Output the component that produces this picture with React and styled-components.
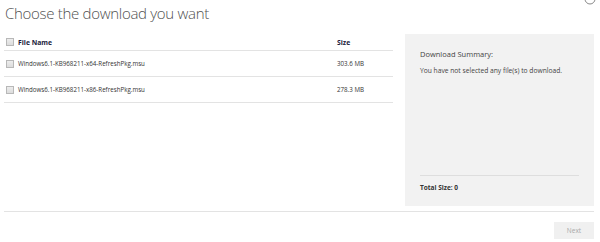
import * as React from 'react'
import styled, { createGlobalStyle } from 'styled-components'

const GlobalStyle = createGlobalStyle`
    html, body {
        margin: 0;
        padding: 0;
        background: #fff;
        font-family: "Open Sans", "Noto Sans", sans-serif;
    }
`

const Page = styled.div`
    position: relative;
    width: 600px;
    height: 242px;
    padding: 0 6px 0 4px;
    box-sizing: border-box;
    overflow: hidden;
`

const CloseIcon = styled.svg`
    position: absolute;
    top: -7px;
    right: 4px;
`

const Title = styled.h1`
    margin: 0;
    padding: 4px 0 0 1px;
    height: 30px;
    box-sizing: border-box;
    font-weight: 300;
    font-size: 15px;
    letter-spacing: -0.3px;
    line-height: 19px;
    color: #505050;
`

const Main = styled.div`
    display: grid;
    grid-template-columns: 389px 189px;
    column-gap: 12px;
    margin-top: 4px;
    height: 172px;
    padding-bottom: 5px;
    border-bottom: 1px solid #e3e3e3;
`

const FileTable = styled.div`
    display: flex;
    flex-direction: column;
`

const Row = styled.div`
    display: grid;
    grid-template-columns: 12px 319px 1fr;
    align-items: center;
    height: ${props => props.header ? 16 : 25}px;
    border-bottom: 1px solid #e3e3e3;
    padding-left: 2px;
    font-size: ${props => props.header ? 6.8 : 6.2}px;
    font-weight: ${props => props.header ? 700 : 400};
    color: ${props => props.header ? '#1a1a3a' : '#333'};
`

const Check = styled.span`
    width: 6px;
    height: 6px;
    border: 1px solid #b8b8b8;
    background: linear-gradient(#ededed, #dcdcdc);
`

const Summary = styled.div`
    background: #f2f2f2;
    display: flex;
    flex-direction: column;
    padding: 15px 15px 0 15px;
`

const SummaryTitle = styled.div`
    font-size: 7.5px;
    color: #444;
    margin-bottom: 7px;
`

const SummaryText = styled.div`
    font-size: 6.7px;
    color: #444;
    flex: 1;
`

const TotalSize = styled.div`
    border-top: 1px solid #dedede;
    height: 31px;
    padding-top: 7px;
    box-sizing: border-box;
    font-size: 6.5px;
    font-weight: 700;
    color: #333;
`

const Footer = styled.div`
    display: flex;
    justify-content: flex-end;
    padding-top: 10px;
`

const NextButton = styled.button`
    width: 40px;
    height: 17px;
    border: none;
    background: #f0f0f0;
    color: #a8a8a8;
    font-family: inherit;
    font-size: 6.5px;
    padding: 0;
`

const files = [
    { name: 'Windows6.1-KB968211-x64-RefreshPkg.msu', size: '303.6 MB' },
    { name: 'Windows6.1-KB968211-x86-RefreshPkg.msu', size: '278.3 MB' }
]

export default function App() {
    return (
        <Page>
            <GlobalStyle />
            <CloseIcon width="12" height="12" viewBox="0 0 12 12">
                <circle cx="6" cy="6" r="5" fill="none" stroke="#888" strokeWidth="1" />
            </CloseIcon>
            <Title>Choose the download you want</Title>
            <Main>
                <FileTable>
                    <Row header>
                        <Check />
                        <span>File Name</span>
                        <span>Size</span>
                    </Row>
                    {files.map(file => (
                        <Row key={file.name}>
                            <Check />
                            <span>{file.name}</span>
                            <span>{file.size}</span>
                        </Row>
                    ))}
                </FileTable>
                <Summary>
                    <SummaryTitle>Download Summary:</SummaryTitle>
                    <SummaryText>You have not selected any file(s) to download.</SummaryText>
                    <TotalSize>Total Size: 0</TotalSize>
                </Summary>
            </Main>
            <Footer>
                <NextButton disabled>Next</NextButton>
            </Footer>
        </Page>
    )
}
